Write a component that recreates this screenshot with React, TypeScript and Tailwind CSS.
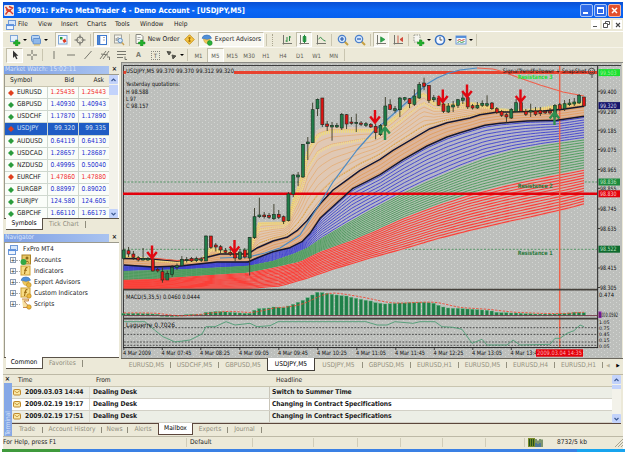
import type { ReactNode } from "react";
import clsx from "clsx";

type Point = [number, number];

/* ---------- chart data (svg units = window pixels) ---------- */

const FIRST_X = 123.7;
const STEP = 4.845;

// [bull, body top, body bottom, high, low]
const CANDLES: [0 | 1, number, number, number, number][] = [
  [1, 250, 258.3, 248.3, 260], [0, 250.7, 254, 247, 257], [0, 254, 257.3, 251, 260], [0, 257.7, 260, 256, 261.5],
  [1, 258.5, 260, 248, 260.5], [1, 258.5, 260, 257, 261], [0, 259, 271, 259, 271.5], [0, 269.3, 271, 267.5, 272.5],
  [0, 271.7, 280, 267.5, 282.7], [1, 273.3, 280, 270.7, 280], [1, 267.3, 274.3, 265, 277], [1, 265.7, 267.3, 263.5, 270],
  [1, 259.3, 265.7, 256, 266.5], [1, 259.3, 260.7, 257, 262.5], [0, 258.5, 261, 257, 262], [1, 258.7, 260.7, 256.7, 262],
  [1, 259, 260.3, 257, 262], [1, 236, 261, 235.5, 261], [0, 236, 247.3, 236, 249], [0, 245, 247, 243, 251.5],
  [0, 246.7, 250, 245, 253], [0, 250.5, 252.3, 248, 254], [0, 252.3, 254, 249, 256], [0, 254, 258, 250, 262],
  [1, 252, 259, 249, 260], [0, 250, 257, 248, 258.5], [1, 237.3, 258, 237, 275.5], [1, 216.7, 237.7, 208, 239],
  [1, 215, 216.7, 197.7, 218], [0, 215, 216.7, 212, 218.5], [0, 215.3, 217.3, 213, 219], [1, 214.3, 218.7, 204, 220],
  [0, 214.3, 217.3, 210, 219], [0, 216.7, 221.3, 215.5, 224], [1, 194, 220.7, 192, 221.5], [1, 175, 194, 174, 197],
  [1, 175, 177, 172, 186], [1, 144.3, 177, 144, 178], [1, 142, 143.7, 137, 160], [1, 109.7, 142.7, 102.7, 143],
  [1, 99.3, 108.7, 98.5, 116], [0, 98, 124.7, 98, 127], [0, 124, 126.3, 121, 131], [1, 125.3, 127, 122, 140.7],
  [1, 125.3, 127, 123, 128], [1, 114.3, 128, 113, 130], [0, 114.7, 124, 114, 129], [0, 122, 123.3, 117, 124.7],
  [1, 122.3, 123.5, 113.7, 132], [0, 123, 124.3, 121, 126], [1, 123.7, 125.3, 122, 127], [0, 124.3, 127, 123, 128],
  [0, 126.3, 132.7, 123.7, 139.3], [1, 125.3, 134.7, 124, 136], [1, 106, 125.3, 97, 126.3], [0, 104.7, 109.3, 99.3, 110],
  [1, 108.7, 110.3, 106, 112.7], [1, 98, 109.7, 97, 117], [1, 97.7, 99.3, 97, 101.3], [0, 98.7, 103.7, 98, 108],
  [1, 96, 104.3, 89.3, 106], [1, 84.3, 98, 82, 99], [0, 83, 86.3, 77.7, 90.3], [0, 85.3, 100.3, 85, 103],
  [1, 97.7, 99.7, 95, 102], [0, 98, 105.3, 96, 106], [0, 104, 111.3, 103, 113], [1, 106, 112, 103, 113],
  [1, 105, 107, 101, 112], [1, 99.7, 105.3, 99, 108], [1, 98, 100.3, 93, 104], [0, 97.7, 107, 97, 109],
  [0, 105.7, 108, 104, 109.5], [1, 105.3, 108, 102, 109], [1, 103.3, 105.3, 100.3, 107], [1, 103.7, 105.3, 95.3, 107],
  [0, 103, 108.7, 102, 110], [0, 108.7, 112.7, 107, 114], [0, 111.3, 115.3, 110, 117], [0, 114.7, 117, 113, 122.7],
  [1, 109.3, 118, 108, 119], [1, 102.7, 111.3, 99, 112], [0, 102.7, 111.3, 101, 112], [0, 111.3, 114.3, 109, 116],
  [1, 110.3, 112, 103.7, 117], [0, 111, 114.3, 107, 116], [0, 110.3, 113.7, 107, 116], [0, 111.3, 113, 110, 114],
  [0, 111, 113, 108, 114.5], [1, 105.3, 117, 104, 119], [0, 104.7, 109.3, 103, 111], [1, 103.7, 108.7, 100, 111],
  [1, 103, 104.7, 99, 106], [1, 102, 104, 98, 106], [1, 95.3, 103, 94, 104], [0, 97, 106, 97, 106.5],
];

const RIBBON_TOP: Point[] = [
  [124, 256], [152, 260], [180, 262], [205, 260], [208, 246], [220, 251], [247, 255], [252, 246], [257, 222], [287, 222],
  [293, 200], [301, 178], [308, 146], [318, 129], [330, 126], [373, 128], [387, 122], [400, 111], [412, 100], [423, 90],
  [433, 101], [447, 104], [470, 102], [485, 105], [497, 109], [513, 111], [533, 110], [563, 105], [584, 102],
];
const FAST_MA: Point[] = [
  [124, 258.5], [152, 259], [177, 261], [200, 259], [220, 254], [248, 254], [257, 248], [273, 241], [287, 237.3],
  [297, 230.7], [307, 220.7], [320, 204], [333, 190], [345, 181.3], [360, 170.3], [380, 159.3], [393, 150.3],
  [410, 140.3], [430, 128.7], [447, 122.7], [470, 118], [480, 114.7], [498, 112], [513, 112], [543, 111], [563, 109.3],
  [584, 106.3],
];
const SLOW_MA: Point[] = [
  [124, 265], [153, 267], [180, 266], [217, 262], [248, 262], [257, 258], [273, 251.7], [290, 247.7], [302, 241.7],
  [310, 233.3], [320, 218.3], [337, 202.7], [353, 188.3], [367, 181.3], [380, 174.7], [403, 159.7], [427, 146],
  [447, 137], [460, 132.7], [485, 125.3], [500, 123.3], [527, 121], [557, 120.3], [584, 116.3],
];
const BLUE_EDGE: Point[] = [
  [124, 271], [180, 269.5], [248, 266], [273, 261], [293, 254], [307, 248], [320, 239], [347, 223], [370, 210],
  [403, 192.5], [425, 182], [460, 167], [485, 157.5], [513, 150], [543, 144.5], [584, 138.7],
];
const GREEN_EDGE: Point[] = [
  [124, 280], [153, 279.3], [187, 276.7], [248, 272.7], [277, 267], [300, 261.7], [320, 251.7], [353, 240], [370, 233],
  [403, 218], [437, 205], [470, 194], [503, 185.5], [532, 179], [553, 175], [584, 169],
];
const RED_EDGE: Point[] = [
  [124, 288.7], [253, 288.7], [280, 286.7], [307, 279], [333, 270], [370, 259], [403, 250], [437, 240], [470, 231.7],
  [503, 224], [537, 216.7], [570, 209], [584, 205],
];
const TREND_UP: Point[] = [
  [220, 258], [248, 257], [265, 253], [280, 248], [300, 235], [317, 208], [333, 182], [343, 168.7], [357, 150],
  [373, 132], [390, 117], [407, 102], [427, 84], [437, 78], [447, 73.7], [460, 70], [477, 68],
];
const TREND_DOWN: Point[] = [[477, 68], [493, 69], [504, 72], [517, 77], [540, 85], [563, 92], [584, 96]];

const MACD = [
  2, 2, 2, 2, 1.7, 1.7, 1.3, 1, -1, -1.3, -1.3, -1, -0.7, 0.7, 1, 1, 1, 3, 3.3, 3.8, 3.6, 3.4, 3, 2.6, 2.3, 2, 2, 5, 6.6, 7,
  7.3, 8.3, 8, 7.7, 9.3, 11, 13, 15, 17.5, 20.3, 23, 22.6, 22, 21, 20.3, 19.6, 19.3, 18, 17, 16, 15, 14.3, 12.6, 12, 11.3,
  11.6, 12, 12.3, 12.3, 12.6, 12.6, 13, 13, 12.6, 12, 10, 8.3, 7.3, 7, 7, 6.6, 6.3, 6, 5.6, 5.3, 5, 4.3, 3, 2.6, 2.6, 2.3,
  2.3, 2, 1.6, 1.6, 1.3, 1.3, 1.3, 1.3, 1.3, 1.6, 2, 2.3, 3, 3, 2.6,
];

const LAGUERRE: Point[] = [
  [124, 321.7], [145, 321.7], [152, 328], [163, 336.7], [175, 342], [190, 340], [202, 334], [206, 326.7], [215, 326.7],
  [226, 321.7], [235, 325], [250, 323.3], [257, 326.7], [270, 325.7], [278, 321.7], [366, 321.7], [377, 325], [387, 325],
  [395, 321.7], [413, 323.3], [420, 321.7], [435, 321.7], [442, 326.7], [453, 327.3], [462, 329.3], [472, 343.3],
  [482, 339.3], [487, 345], [507, 345], [513, 340], [520, 345], [550, 344.3], [555, 338.3], [560, 338.3], [567, 333.3],
  [574, 330.7], [580, 325], [584, 326.7],
];

const SCALE: [string, number][] = [
  ["99.400", 91.3], ["99.290", 111.9], ["99.185", 130.3], ["99.075", 149.5], ["98.965", 169.5], ["98.855", 188.3],
  ["98.745", 209], ["98.635", 228.5], ["98.415", 268], ["98.305", 287.5],
];
const TIMES: [string, number][] = [
  ["4 Mar 2009", 123], ["4 Mar 07:45", 161.5], ["4 Mar 08:25", 200], ["4 Mar 09:05", 239], ["4 Mar 09:45", 278],
  ["4 Mar 10:25", 317], ["4 Mar 11:05", 356], ["4 Mar 11:45", 395], ["4 Mar 12:25", 433.5], ["4 Mar 13:05", 472],
  ["4 Mar 13:45", 510.5],
];

function yAt(line: Point[], x: number) {
  for (let i = 1; i < line.length; i++) {
    const [x0, y0] = line[i - 1];
    const [x1, y1] = line[i];
    if (x <= x1) return y0 + ((y1 - y0) * (x - x0)) / (x1 - x0);
  }
  return line[line.length - 1][1];
}

const XS = CANDLES.map((_, i) => FIRST_X + i * STEP);

function toPoints(line: Point[]) {
  return line.map((p) => p.join(",")).join(" ");
}

function blend(a: Point[], b: Point[], t: number) {
  return XS.map((x) => `${x.toFixed(1)},${(yAt(a, x) * (1 - t) + yAt(b, x) * t).toFixed(1)}`).join(" ");
}

interface RibbonProps {
  top: Point[];
  bottom: Point[];
  count: number;
  color: string;
  fill: string;
  width?: number;
}

function Ribbon({ top, bottom, count, color, fill, width = 1 }: RibbonProps) {
  const area = [
    ...XS.map((x) => [x, yAt(top, x)] as Point),
    ...[...XS].reverse().map((x) => [x, yAt(bottom, x)] as Point),
  ];
  return (
    <g fill="none" stroke={color} strokeWidth={width}>
      <polygon points={toPoints(area)} fill={fill} stroke="none" />
      {Array.from({ length: count }, (_, i) => (
        <polyline key={i} points={blend(top, bottom, (i + 0.5) / count)} />
      ))}
    </g>
  );
}

interface LabelProps {
  x: number;
  y: number;
  w: number;
  size?: number;
  fill?: string;
  bold?: boolean;
  children: string;
}

function Label({ x, y, w, size = 6, fill = "#111", bold, children }: LabelProps) {
  return (
    <text x={x} y={y} textLength={w} lengthAdjust="spacingAndGlyphs" fontSize={size} fill={fill} fontWeight={bold ? 700 : 400}>
      {children}
    </text>
  );
}

function PriceTag({ y, color, text, fill = "#fff" }: { y: number; color: string; text: string; fill?: string }) {
  return (
    <g>
      <rect x="598.5" y={y - 3.5} width="21.5" height="7" fill={color} />
      <Label x={600} y={y + 2.2} w={16.5} fill={fill}>
        {text}
      </Label>
    </g>
  );
}

function SignalArrow({ x, y, up }: { x: number; y: number; up?: boolean }) {
  return (
    <path
      transform={`translate(${x} ${y})${up ? " scale(1 -1)" : ""}`}
      d="M0-7V5.5M-4.8-.5L0 5.5 4.8-.5"
      fill="none"
      stroke={up ? "#2f8f50" : "#e00812"}
      strokeWidth="2.4"
    />
  );
}

function Chart() {
  return (
    <svg
      className="block h-[296px] w-[502px] shrink-0"
      viewBox="121 62 502 296"
      fontFamily="'DejaVu Sans Condensed', 'DejaVu Sans', sans-serif"
    >
      <defs>
        <pattern id="grain" width="6" height="4" patternUnits="userSpaceOnUse">
          <rect width="6" height="4" fill="#bdbfbc" />
          <rect x="1" y="0" width="1" height="1" fill="#d3d5d2" />
          <rect x="4" y="2" width="1" height="1" fill="#d3d5d2" />
        </pattern>
      </defs>
      <rect x="121" y="62" width="502" height="296" fill="#bfbfba" />
      <rect x="122" y="64" width="500" height="294" fill="url(#grain)" shapeRendering="crispEdges" />
      <path d="M121 62.5H623M121.5 62V358" stroke="#8b8b85" fill="none" />
      <path d="M123.5 348V65.5H621" stroke="#3c3c3c" fill="none" />
      <path d="M622.5 63V358" stroke="#ece9d8" />

      <g stroke="#3c8c50" strokeWidth="0.8" strokeDasharray="2 1.6">
        <path d="M124 182H597M124 249.3H597" />
      </g>

      <Ribbon top={RIBBON_TOP} bottom={FAST_MA} count={9} color="#e5a96c" fill="#e0c8b4" width={0.7} />
      <Ribbon top={FAST_MA} bottom={SLOW_MA} count={4} color="#e29a55" fill="#dcb59c" width={0.8} />
      <Ribbon top={SLOW_MA} bottom={BLUE_EDGE} count={9} color="#3c40cf" fill="#b6b6c8" width={0.9} />
      <Ribbon top={BLUE_EDGE} bottom={GREEN_EDGE} count={12} color="#479858" fill="#b4c0b4" width={0.9} />
      <Ribbon top={GREEN_EDGE} bottom={RED_EDGE} count={14} color="#fa4039" fill="#ccb8b3" width={1.1} />
      <g fill="none" strokeDasharray="1 1">
        <polyline points={blend(RIBBON_TOP, FAST_MA, 0.08)} stroke="#f0e070" strokeWidth="3.5" />
        <polyline points={blend(RIBBON_TOP, FAST_MA, 0.3)} stroke="#f2dc8a" strokeWidth="2.5" />
        <polyline points={blend(RIBBON_TOP, FAST_MA, 0.85)} stroke="#d9a030" strokeWidth="1" />
      </g>

      <path d="M123 193.7H597" stroke="#e3000b" strokeWidth="2.6" />
      <path d="M234 72.4H597" stroke="#e8422e" strokeWidth="3" />
      <path d="M123.5 72.4H126" stroke="#e8422e" strokeWidth="3" />
      <path d="M559.7 66V348" stroke="#f0624a" strokeWidth="1.4" />

      <g fill="none" strokeLinejoin="round">
        <polyline points={toPoints(FAST_MA)} stroke="#161630" strokeWidth="1.5" />
        <polyline points={toPoints(SLOW_MA)} stroke="#161630" strokeWidth="1.5" />
        <polyline points={toPoints(TREND_UP)} stroke="#4b8ac4" strokeWidth="1.2" />
        <polyline points={toPoints(TREND_DOWN)} stroke="#f0604c" strokeWidth="1.1" />
        <path d="M152 258L177 260.5 205 258.5" stroke="#f0604c" strokeWidth="1.2" />
      </g>

      {CANDLES.map(([bull, top, bottom, high, low], i) => (
        <g key={i}>
          <path d={`M${XS[i]} ${high}V${low}`} stroke="#3a3a28" strokeWidth="0.9" />
          <rect
            x={XS[i] - 1.5}
            y={top}
            width="3"
            height={bottom - top}
            fill={bull ? "#1f7d48" : "#dc1414"}
            stroke="#1c2c20"
            strokeWidth="0.6"
          />
        </g>
      ))}

      <SignalArrow x={152} y={252.5} />
      <SignalArrow x={234.5} y={247} />
      <SignalArrow x={375} y={117} />
      <SignalArrow x={442.8} y={96.5} />
      <SignalArrow x={467} y={91.5} />
      <SignalArrow x={520.5} y={96.5} />
      <SignalArrow x={385} y={133} up />
      <SignalArrow x={554.5} y={118} up />

      <Label x={126} y={72.8} w={108}>USDJPY,M5  99.370 99.370 99.312 99.320</Label>
      <Label x={126} y={86.2} w={54}>Yesterday quotations:</Label>
      <Label x={126} y={93.6} w={22.5}>H 98.588</Label>
      <Label x={126} y={100.6} w={10}>L 97</Label>
      <Label x={126} y={107.8} w={22.5}>C 98.157</Label>
      <Label x={502.5} y={73.4} w={84}>SignalTrendFollower + SnapShot</Label>
      <g fill="none" stroke="#333" strokeWidth="0.8">
        <circle cx="591.6" cy="71.4" r="3.2" />
        <path d="M589.8 72q1.8 2 3.6 0M590.5 70v.8M592.7 70v.8M592 75v3" />
      </g>
      <Label x={517.7} y={79.2} w={35} fill="#23e03a" bold>Resistance 3</Label>
      <Label x={517.7} y={188} w={35} fill="#2c7a3e" bold>Resistance 2</Label>
      <Label x={517.7} y={255.2} w={35} fill="#2c7a3e" bold>Resistance 1</Label>

      {/* sub windows */}
      <path d="M123 289.7H598M123 318.7H598" stroke="#44403a" strokeWidth="1.8" />
      <path d="M123 347.6H598M597.7 66V348" stroke="#222" fill="none" />
      {MACD.map((v, i) => (
        <rect
          key={i}
          x={XS[i] - 1.9}
          y={v > 0 ? 315.3 - v : 315.3}
          width="3.4"
          height={Math.abs(v)}
          fill="#1f8049"
          stroke="#5db37c"
          strokeWidth="0.4"
        />
      ))}
      <path d="M123 315.6H598" stroke="#6b3040" strokeWidth="0.9" />
      <polyline
        points={MACD.map((_, i) => {
          const recent = MACD.slice(Math.max(0, i - 4), i + 1);
          const avg = recent.reduce((a, b) => a + b, 0) / recent.length;
          return `${XS[i]},${314.9 - avg}`;
        }).join(" ")}
        fill="none"
        stroke="#ee4a34"
        strokeWidth="0.9"
        strokeDasharray="2.4 1.4"
      />
      <Label x={126} y={298.6} w={74}>MACD(5,35,5) 0.0460 0.0444</Label>
      <path d="M124 327.7H597M124 334.4H597M124 342H597M124 345.3H597" stroke="#444" strokeWidth="0.9" strokeDasharray="1.8 1.4" />
      <polyline points={toPoints(LAGUERRE)} fill="none" stroke="#4d9c74" strokeWidth="0.9" />
      <Label x={126} y={327.4} w={49}>Laguerre 0.7026</Label>

      {/* price scale */}
      {SCALE.map(([text, y]) => (
        <g key={text}>
          <path d={`M598 ${y}h2`} stroke="#222" strokeWidth="0.8" />
          <Label x={600} y={y + 2.2} w={16.5}>{text}</Label>
        </g>
      ))}
      <PriceTag y={72.6} color="#19e02e" text="99.503" fill="#9ff0a0" />
      <PriceTag y={105.6} color="#16166a" text="99.320" fill="#d8d8f0" />
      <PriceTag y={182} color="#1c8a3c" text="98.836" fill="#b8e0c0" />
      <PriceTag y={193.8} color="#e3000b" text="98.830" fill="#ffc8c8" />
      <PriceTag y={249.2} color="#0f6a2e" text="98.522" fill="#b8e0c0" />
      <Label x={599} y={297.4} w={15}>0.474</Label>
      <rect x="598.5" y="311.5" width="3" height="6.5" fill="#8a1fa8" />
      <Label x={599} y={316.8} w={6}>0.00</Label>
      <Label x={605.6} y={316.8} w={12.4}>0.0592</Label>
      <Label x={599} y={323.9} w={10.5} size={4.8}>1.05</Label>
      <Label x={599} y={329.8} w={10.5} size={4.8}>0.75</Label>
      <Label x={599} y={335.9} w={10.5} size={4.8}>0.45</Label>
      <Label x={599} y={341.7} w={10.5} size={4.8}>0.15</Label>
      <Label x={599} y={347.5} w={10.5} size={4.8}>0.05</Label>

      {/* time scale */}
      {TIMES.map(([text, x]) => (
        <g key={text}>
          <path d={`M${x + 0.8} 348v2`} stroke="#222" strokeWidth="0.8" />
          <Label x={x} y={355} w={text.length > 10 ? 30 : 28}>{text}</Label>
        </g>
      ))}
      <rect x="536" y="349.3" width="47" height="7.4" fill="#e3000b" />
      <Label x={537} y={355.2} w={45} fill="#ffb4b4">2009.03.04 14:35</Label>
    </svg>
  );
}

/* ---------- small icons ---------- */

function Icon({ size = 12, children }: { size?: number; children: ReactNode }) {
  return (
    <svg width={size} height={size} viewBox="0 0 12 12" fill="none" className="shrink-0">
      {children}
    </svg>
  );
}

const PLUS = "M6.5 6h2.4v2H11v2H8.900v2H6.500v-2H4.500V8h2z";

const WindowsIcon = () => (
  <Icon>
    <rect x="3.500" y="1.500" width="7" height="5" fill="#d6e6fa" stroke="#6f9ad8" />
    <rect x="1.500" y="5.500" width="7" height="5" fill="#eef5ff" stroke="#6f9ad8" />
    <path d="M1 6.300h8" stroke="#5a90e0" strokeWidth="1.500" />
  </Icon>
);
const NewChartIcon = () => (
  <Icon>
    <rect x="1.500" y="1.500" width="7" height="6" fill="#e6f0fb" stroke="#7fa6d6" />
    <path d={PLUS} fill="#22b02c" stroke="#128a1c" strokeWidth="0.500" />
  </Icon>
);
const ProfilesIcon = () => (
  <Icon>
    <rect x="1.500" y="1.500" width="8" height="6" rx="1" fill="#b8d4f4" stroke="#5f8fce" />
    <rect x="3" y="4.500" width="7.500" height="5.500" rx="1" fill="#8fb8ea" stroke="#5f8fce" />
    <path d="M4 11h6" stroke="#d8b860" />
  </Icon>
);
const WatchIcon = () => (
  <Icon>
    <rect x="1.500" y="1.500" width="8.500" height="8.500" fill="#f2f7ff" stroke="#7fa6d6" />
    <path d="M5.500 6.500L8 4.500l1.500 3-2.500 1.500z" fill="#dd3a22" />
    <path d="M3 3h2.500v2.500H3z" fill="#2a9a3a" />
  </Icon>
);
const DataIcon = () => (
  <Icon>
    <circle cx="6" cy="6" r="3.200" stroke="#6c6c66" />
    <path d="M6 .500v4M6 7.500v4M.500 6h4M7.500 6h4" stroke="#6c6c66" />
  </Icon>
);
const NavigatorIcon = () => (
  <Icon>
    <rect x="1.500" y="1.500" width="9" height="9" fill="#fff" stroke="#3d79cf" />
    <path d="M3.200 1v10" stroke="#3d79cf" strokeWidth="2.200" />
    <path d="M7 3.500h2M7 6h2" stroke="#aab" />
  </Icon>
);
const TesterIcon = () => (
  <Icon>
    <rect x="1.500" y="1" width="7" height="8" fill="#f4f4ee" stroke="#a4a49c" />
    <path d="M3.200 7V4M5 7V3" stroke="#888" />
    <circle cx="7.200" cy="6.500" r="2.200" fill="#d8e8fa" stroke="#6090c0" />
    <path d="M9 8.500l2 2.500" stroke="#c8a050" strokeWidth="1.300" />
  </Icon>
);
const OrderIcon = () => (
  <Icon>
    <path d="M2 .500h5l2 2v7H2z" fill="#fafaf4" stroke="#8a8a82" />
    <path d="M3.500 3.500h3M3.500 5.500h2" stroke="#aaa" />
    <path d={PLUS} fill="#22b02c" stroke="#128a1c" strokeWidth="0.500" />
  </Icon>
);
const EditorIcon = () => (
  <Icon size={11}>
    <path d="M6 .800L11.200 6 6 11.200 .800 6z" fill="#f5c542" stroke="#c89018" />
    <path d="M6 3.500v5M4.500 4.500q1.500-1 3 0M4.500 7.500q1.500 1 3 0" stroke="#9c6a08" />
  </Icon>
);
const AdvisorsIcon = ({ stopped }: { stopped?: boolean }) => (
  <Icon>
    <path d="M1 4.200q1-3.400 5-3.200 3.500 0 4.500 3.200L6 5.800z" fill="#4f8fd8" stroke="#356fb4" strokeWidth="0.600" />
    <path d="M2.500 5q.5 4.500 4 4.500Q9 9 9 5L6 6z" fill="#f2c95c" stroke="#c09a3a" strokeWidth="0.500" />
    <circle cx="8.800" cy="9" r="2.400" fill={stopped ? "#e8b840" : "#2bb03a"} stroke={stopped ? "#b88a1c" : "#158a24"} strokeWidth="0.600" />
  </Icon>
);
const BarsIcon = ({ kind }: { kind: "bars" | "candles" | "line" | "scroll" | "shift" }) => (
  <Icon>
    <path d="M2.500 1v9.500M1.500 9.500H11" stroke="#77776f" />
    {kind === "bars" && <path d="M6 3v5M4.500 7H6M8.500 2v5M8.500 3H10" stroke="#2d8a43" />}
    {kind === "candles" && <path d="M6.500 .800v8.200M5.200 2.500h2.600v5H5.200z" stroke="#1f8c3c" fill="#37b356" />}
    {kind === "line" && <path d="M3.500 5q2-3 3.500-.500T10.500 7" stroke="#2d8a43" />}
    {kind === "scroll" && <path d="M5.500 2.500v6M6 3l4 2.500L6 8z" stroke="#1f8c3c" strokeWidth="0.600" fill="#2eaa49" />}
    {kind === "shift" && <path d="M6 1.500v7.500M10.500 3.500L8 5.500l2.500 2z" stroke="#cc3a2a" strokeWidth="0.800" fill="#dc4a38" />}
  </Icon>
);
const ZoomIcon = ({ plus }: { plus?: boolean }) => (
  <Icon>
    <path d="M7.500 7.500L11 11" stroke="#c8a040" strokeWidth="2" />
    <circle cx="5" cy="5" r="3.700" fill="#d4e6fb" stroke="#4a7fca" strokeWidth="1.200" />
    <path d={plus ? "M3 5h4M5 3v4" : "M3 5h4"} stroke="#2358b0" strokeWidth="1.200" />
  </Icon>
);
const IndicatorsIcon = () => (
  <Icon>
    <rect x="1" y="1" width="6" height="7" fill="#f6f6f0" stroke="#99998f" strokeDasharray="1.500 1" />
    <path d={PLUS} fill="#22b02c" stroke="#128a1c" strokeWidth="0.500" />
  </Icon>
);
const ClockIcon = () => (
  <Icon>
    <circle cx="6" cy="6" r="4.500" fill="#f2f7ff" stroke="#3b74c4" strokeWidth="1.600" />
    <path d="M6 3v3h2.200" stroke="#555" />
  </Icon>
);
const TemplateIcon = () => (
  <Icon>
    <rect x="1" y="2" width="10" height="8" fill="#f4f8fc" stroke="#6f9ad8" />
    <path d="M1 3h10" stroke="#4a86d6" strokeWidth="1.800" />
    <path d="M2.500 6.500l2-1 2 1 3-1" stroke="#cf4a36" />
    <path d="M2.500 8.500l2-1 2 1 3-1" stroke="#3b9a4c" />
  </Icon>
);

const Caret = () => <span className="h-0 w-0 border-x-2 border-t-2 border-x-transparent border-t-black" />;
const Divider = () => <span className="mx-[2px] h-[12px] w-px bg-[#c9c5b0]" />;
const Grip = () => <span className="mx-[3px] h-[12px] w-[3px] border-l border-dotted border-[#aaa690]" />;

function Tool({ w, pressed, children }: { w: string; pressed?: boolean; children: ReactNode }) {
  return (
    <div
      className={clsx(
        "flex h-[15px] shrink-0 items-center justify-center gap-[2px] border",
        w,
        pressed ? "border-[#c2bea9] border-r-white border-b-white bg-[#f8f7f0]" : "border-transparent",
      )}
    >
      {children}
    </div>
  );
}

function MainToolbar() {
  return (
    <div className="flex h-[16px] items-center border-t border-white">
      <div className="flex w-[52px] shrink-0 items-center pl-[4px]">
        <Tool w="w-[21px]"><NewChartIcon /><Caret /></Tool>
        <Tool w="w-[22px]"><ProfilesIcon /><Caret /></Tool>
      </div>
      <Tool w="w-[16px]" pressed><WatchIcon /></Tool>
      <Tool w="w-[17px]"><DataIcon /></Tool>
      <Divider />
      <Tool w="w-[17px]" pressed><NavigatorIcon /></Tool>
      <Tool w="w-[17px]"><TesterIcon /></Tool>
      <Divider />
      <Tool w="w-[49px]"><OrderIcon /><span>New Order</span></Tool>
      <Tool w="w-[17px]"><EditorIcon /></Tool>
      <Tool w="w-[66px]" pressed><AdvisorsIcon /><span>Expert Advisors</span></Tool>
      <Divider />
      <Grip />
      <Tool w="w-[18px]"><BarsIcon kind="bars" /></Tool>
      <Tool w="w-[16px]" pressed><BarsIcon kind="candles" /></Tool>
      <Tool w="w-[17px]"><BarsIcon kind="line" /></Tool>
      <Divider />
      <Tool w="w-[17px]"><ZoomIcon plus /></Tool>
      <Tool w="w-[17px]"><ZoomIcon /></Tool>
      <Divider />
      <Tool w="w-[16px]" pressed><BarsIcon kind="scroll" /></Tool>
      <Tool w="w-[17px]"><BarsIcon kind="shift" /></Tool>
      <Divider />
      <Tool w="w-[21px]"><IndicatorsIcon /><Caret /></Tool>
      <Tool w="w-[21px]"><ClockIcon /><Caret /></Tool>
      <Tool w="w-[21px]"><TemplateIcon /><Caret /></Tool>
      <Divider />
    </div>
  );
}

const DRAW_TOOLS = [
  "M6 2v8", "M2 6h8", "M2.500 10L9.500 2", "M1 10L7 2M4 10l6-8M2 5l7 1M8 8h2.500v3",
  "M1 2.500h9M1 5.500h9M1 8.500h6M9 7.500v3h2",
];
const PERIODS = ["M1", "M5", "M15", "M30", "H1", "H4", "D1", "W1", "MN"];

function LineToolbar() {
  return (
    <div className="flex h-[15px] items-center border-t border-[#f6f4ea]">
      <div className="w-[3px] shrink-0" />
      <Tool w="w-[17px]" pressed>
        <Icon><path d="M4 1.500v7.500l1.800-1.700 1.400 3 1.300-.600-1.400-2.900h2.300z" fill="#333" /></Icon>
      </Tool>
      <Tool w="w-[17px]"><Icon><path d="M6 1v4M6 7v4M1 6h4M7 6h4" stroke="#66665e" /></Icon></Tool>
      <Divider />
      {DRAW_TOOLS.map((d) => (
        <Tool key={d} w="w-[17px]"><Icon><path d={d} stroke="#77776d" /></Icon></Tool>
      ))}
      <Tool w="w-[17px]"><span className="text-[7px] font-bold text-[#77776d]">A</span></Tool>
      <Tool w="w-[17px]">
        <span className="flex h-[9px] w-[9px] items-center justify-center border border-dotted border-[#88887e] text-[6px] text-[#55554d]">T</span>
      </Tool>
      <Tool w="w-[21px]">
        <Icon><path d="M1 2.500l4 .500-2 3zM6 6l4 1-3 3z" fill="#55554d" stroke="#55554d" /></Icon>
        <Caret />
      </Tool>
      <Divider />
      <div className="flex text-[6px] text-[#5c5c54]">
        {PERIODS.map((p) => (
          <Tool key={p} w="w-[16.9px]" pressed={p === "M5"}>{p}</Tool>
        ))}
      </div>
      <Divider />
    </div>
  );
}

/* ---------- side panels ---------- */

function PanelTitle({ children }: { children: ReactNode }) {
  return (
    <div className="flex h-[9px] shrink-0 items-center justify-between">
      <div className="flex h-[8px] w-[105px] items-center overflow-hidden bg-linear-to-r from-[#7d9fe4] to-[#a9c3f0] pl-px text-[#dbe6fb]">
        {children}
      </div>
      <span className="pr-[2px] text-[7px] font-bold">×</span>
    </div>
  );
}

function ScrollButton({ down }: { down?: boolean }) {
  return (
    <div className="flex h-[9px] w-[9px] shrink-0 items-center justify-center rounded-[1px] bg-[#c3d3fb]">
      <svg width="5" height="4" viewBox="0 0 5 4" fill="none">
        <path d={down ? "M.500 1l2 2 2-2" : "M.500 3l2-2 2 2"} stroke="#3f5c96" strokeWidth="1.200" />
      </svg>
    </div>
  );
}

const QUOTES = [
  { symbol: "EURUSD", bid: "1.25435", ask: "1.25443", down: true },
  { symbol: "GBPUSD", bid: "1.40930", ask: "1.40943" },
  { symbol: "USDCHF", bid: "1.17870", ask: "1.17890" },
  { symbol: "USDJPY", bid: "99.320", ask: "99.335", down: true, selected: true },
  { symbol: "AUDUSD", bid: "0.64119", ask: "0.64130" },
  { symbol: "USDCAD", bid: "1.28657", ask: "1.28687" },
  { symbol: "NZDUSD", bid: "0.49995", ask: "0.50040" },
  { symbol: "EURCHF", bid: "1.47860", ask: "1.47880", down: true },
  { symbol: "EURGBP", bid: "0.88997", ask: "0.89020" },
  { symbol: "EURJPY", bid: "124.580", ask: "124.605" },
  { symbol: "GBPCHF", bid: "1.66110", ask: "1.66173" },
];

function MarketWatch() {
  return (
    <div className="flex h-[166px] flex-col">
      <PanelTitle>Market Watch: 15:02:11</PanelTitle>
      <div className="flex h-[144px] border-t border-l border-[#9c9a8c] bg-white">
        <div className="flex w-[104px] shrink-0 flex-col overflow-hidden">
          <div className="grid h-[12px] shrink-0 grid-cols-[42px_31px_31px] items-center border-b border-[#c9c5b0] bg-[#ece9d8]">
            <span className="pl-[5px]">Symbol</span>
            <span className="pr-[4px] text-right">Bid</span>
            <span className="pr-[5px] text-right">Ask</span>
          </div>
          {QUOTES.map((q) => (
            <div
              key={q.symbol}
              className={clsx(
                "grid h-[12.13px] shrink-0 grid-cols-[42px_31px_31px] border-b border-[#cfd8cf]",
                q.selected ? "bg-[#1f5cc4] text-[#d6e2fa]" : "bg-[#fafdf9]",
              )}
            >
              <span className="flex items-center gap-[3px] pl-[3px]">
                <svg width="6" height="6" viewBox="0 0 6 6">
                  <path d="M3 0l3 3-3 3-3-3z" fill={q.down ? "#e0401e" : "#2a9c3c"} />
                </svg>
                {q.symbol}
              </span>
              {[q.bid, q.ask].map((price) => (
                <span
                  key={price}
                  className={clsx(
                    "flex items-center justify-end border-l border-[#cfd8cf] pr-[3px]",
                    !q.selected && (q.down ? "text-[#f22c2c]" : "text-[#1a2fd0]"),
                  )}
                >
                  {price}
                </span>
              ))}
            </div>
          ))}
        </div>
        <div className="flex w-[9px] flex-col justify-between bg-[#f3f2ea]">
          <div>
            <ScrollButton />
            <div className="mt-px h-[10px] w-[9px] bg-[#c3d3fb]" />
          </div>
          <ScrollButton down />
        </div>
      </div>
      <PanelTabs active="Symbols" other="Tick Chart" />
    </div>
  );
}

function PanelTabs({ active, other }: { active: string; other: string }) {
  return (
    <div className="flex h-[12px] shrink-0 border-t border-[#5a5248] text-[#8f8c7c]">
      <span className="-mt-px ml-[2px] flex h-[12px] w-[37px] items-center justify-center border-r border-b border-[#5a5248] bg-white text-black">
        {active}
      </span>
      <span className="flex h-[10px] items-center pl-[6px]">{other}</span>
      <span className="ml-[6px] mt-[2px] h-[7px] w-px bg-[#8f8c7c]" />
    </div>
  );
}

const FolderIcon = ({ custom }: { custom?: boolean }) => (
  <Icon>
    <rect x="1" y="1" width="9" height="9" fill="#f7dc84" stroke="#cf9f33" />
    <path d="M7.500 2.800Q6 2.200 5.500 4L4.500 9M4 5.200h3" stroke="#9a6a10" strokeWidth="1.100" />
    {custom && <circle cx="9" cy="9" r="2.200" fill="#f0b93a" stroke="#b98520" strokeWidth="0.700" />}
  </Icon>
);

const NAV_ITEMS = [
  {
    label: "Accounts",
    icon: (
      <Icon>
        <rect x="2" y="1" width="8.500" height="9" fill="#e9c765" stroke="#a98224" />
        <circle cx="7" cy="4" r="1.500" fill="#8a6a1c" />
        <path d="M5 8.500q2-3 4 0" stroke="#8a6a1c" />
        <circle cx="3.500" cy="8" r="3" fill="#32a845" />
      </Icon>
    ),
  },
  { label: "Indicators", icon: <FolderIcon /> },
  { label: "Expert Advisors", icon: <AdvisorsIcon stopped /> },
  { label: "Custom Indicators", icon: <FolderIcon custom /> },
  {
    label: "Scripts",
    icon: (
      <Icon>
        <path d="M2 1h6.500v2H4L8.500 8v1.500H3" fill="#f7e0a0" stroke="#c58a50" />
        <circle cx="9" cy="9" r="2.200" fill="#f0b93a" stroke="#b98520" strokeWidth="0.700" />
      </Icon>
    ),
  },
];

function Navigator() {
  return (
    <div className="mt-[2px] flex h-[136px] flex-col">
      <PanelTitle>Navigator</PanelTitle>
      <div className="flex flex-1 flex-col border-t border-l border-[#9c9a8c] bg-white pt-px">
        <div className="flex h-[11px] items-center gap-[4px] pl-[2px]">
          <WindowsIcon />
          FxPro MT4
        </div>
        {NAV_ITEMS.map(({ label, icon }) => (
          <div key={label} className="flex h-[10.9px] items-center pl-[5px]">
            <span className="flex h-[6px] w-[6px] items-center justify-center border border-[#8d9db4] bg-white text-[6px] leading-none">+</span>
            <span className="w-[4px] border-t border-dotted border-[#aaa]" />
            {icon}
            <span className="pl-[2px]">{label}</span>
          </div>
        ))}
      </div>
      <PanelTabs active="Common" other="Favorites" />
    </div>
  );
}

/* ---------- bottom ---------- */

const CHART_TABS = [
  "EURUSD,M5", "USDCHF,M5", "GBPUSD,M5", "USDJPY,M5", "USDJPY,M5", "GBPUSD,M5", "EURUSD,H1", "EURUSD,M5", "EURUSD,H4",
  "EURUSD,H1",
];

function ChartTabs() {
  return (
    <div className="flex h-[14px] border-t border-[#6a665c] pl-[2px] text-[#94917f]">
      {CHART_TABS.map((tab, i) => (
        <div
          key={i}
          className={clsx(
            "flex w-[48px] shrink-0 items-center justify-center",
            i === 3
              ? "-mt-px h-[13px] border-x border-b border-[#44403a] bg-white text-black"
              : "h-[12px]",
          )}
        >
          <span className="flex-1 text-center">{tab}</span>
          {i !== 3 && i !== 2 && <span className="h-[6px] w-px bg-[#94917f]" />}
        </div>
      ))}
      <div className="flex h-[12px] flex-1 items-center justify-around text-[5px]">
        <span className="text-[#b5b19c]">◀</span>
        <span className="text-black">▶</span>
      </div>
    </div>
  );
}

const MAILS = [
  ["2009.03.03 14:44", "Dealing Desk", "Switch to Summer Time"],
  ["2009.02.19 19:17", "Dealing Desk", "Changing in Contract Specifications"],
  ["2009.02.19 17:51", "Dealing Desk", "Changing in Contract Specifications"],
];
const TERMINAL_TABS = ["Trade", "Account History", "News", "Alerts", "Mailbox", "Experts", "Journal"];
const TAB_WIDTHS = ["w-[31px]", "w-[59px]", "w-[26px]", "w-[30px]", "w-[35px]", "w-[35px]", "w-[34px]"];

function Terminal() {
  return (
    <div className="mt-[2px] flex h-[62px] border-t border-[#bdb9a6]">
      <div className="flex w-[9px] shrink-0 flex-col items-center">
        <span className="h-[8px] text-[7px] leading-[8px] font-bold">×</span>
        <div className="flex w-[8px] flex-1 items-center overflow-hidden bg-[#86a8e6] text-[6.5px] leading-[8px] text-[#dbe6fb] [writing-mode:sideways-lr]">
          <span>Terminal</span>
        </div>
      </div>
      <div className="flex w-[609px] flex-col">
        <div className="flex h-[49px] border-b border-[#5c463c]">
          <div className="flex-1">
            <div className="grid h-[12px] grid-cols-[78px_180px_1fr] items-center border-b border-[#c9c5b0] pl-[6px]">
              <span>Time</span>
              <span>From</span>
              <span>Headline</span>
            </div>
            {MAILS.map(([time, from, headline], i) => (
              <div
                key={time}
                className={clsx(
                  "grid h-[12.1px] grid-cols-[77px_180px_1fr] border-b border-[#d2d0c6] text-[6.7px] font-bold tracking-[-0.05px]",
                  i === 1 ? "bg-white" : "bg-[#eceee6]",
                )}
              >
                <span className="flex items-center gap-[4px] pl-px">
                  <svg width="8" height="7" viewBox="0 0 8 7">
                    <rect x=".500" y=".500" width="7" height="5.500" rx="1" fill="#fae9a8" stroke="#c08a2c" />
                    <path d="M1 1.500l3 2.300L7 1.500" fill="none" stroke="#c08a2c" strokeWidth=".800" />
                  </svg>
                  {time}
                </span>
                <span className="flex items-center border-l border-[#dddbd0] pl-[3px]">{from}</span>
                <span className="flex items-center border-l border-[#c9c5b8] pl-[2px]">{headline}</span>
              </div>
            ))}
          </div>
          <div className="flex w-[9px] flex-col justify-between bg-[#f3f2ea]">
            <div>
              <ScrollButton />
              <div className="mt-px h-[4px] w-[9px] bg-[#c3d3fb]" />
            </div>
            <ScrollButton down />
          </div>
        </div>
        <div className="flex h-[12px] text-[#8f8c7c]">
          {TERMINAL_TABS.map((tab, i) => (
            <div
              key={tab}
              className={clsx(
                "flex shrink-0 items-center justify-center",
                TAB_WIDTHS[i],
                tab === "Mailbox"
                  ? "-mt-px h-[12px] border-x border-b border-[#5c463c] bg-white text-black"
                  : "h-[11px]",
              )}
            >
              <span className="flex-1 text-center">{tab}</span>
              {i !== 3 && i !== 4 && <span className="h-[6px] w-px bg-[#8f8c7c]" />}
            </div>
          ))}
        </div>
      </div>
    </div>
  );
}

function StatusBar() {
  return (
    <div className="flex h-[12px] items-center border-t border-[#bdb9a6]">
      <span className="w-[183px] shrink-0">For Help, press F1</span>
      <span className="h-[9px] w-[66px] shrink-0 border-l border-[#d0ccb8] pl-[3px] leading-[9px]">Default</span>
      <span className="h-[9px] w-[61px] shrink-0 border-l border-[#d0ccb8]" />
      <span className="h-[9px] w-[44px] shrink-0 border-l border-[#d0ccb8]" />
      <span className="h-[9px] w-[43px] shrink-0 border-l border-[#d0ccb8]" />
      <span className="h-[9px] w-[42px] shrink-0 border-l border-[#d0ccb8]" />
      <span className="h-[9px] w-[43px] shrink-0 border-l border-[#d0ccb8]" />
      <span className="h-[9px] w-[39px] shrink-0 border-l border-[#d0ccb8]" />
      <div className="flex h-[9px] flex-1 items-center border-l border-[#d0ccb8] pl-[3px]">
        <svg width="15" height="9" viewBox="0 0 15 9">
          <rect width="7" height="9" fill="#7d8f2a" />
          <path d="M1.500 1v7M3.500 1v7M5.500 1v7M8 1v8M10 2.500V9M12 1v8M14 1.500V9" stroke="#24521c" strokeWidth="1.100" />
          <path d="M8 5v4M10 6v3M12 5v4" stroke="#2c62b8" strokeWidth="1.100" />
        </svg>
        <span className="pl-[14px]">8732/5 kb</span>
      </div>
      <svg width="9" height="9" viewBox="0 0 9 9">
        <path d="M1 9l8-8M4 9l5-5M7 9l2-2" stroke="#a8a490" />
      </svg>
    </div>
  );
}

/* ---------- window ---------- */

function TitleBar() {
  return (
    <div className="flex h-[16px] items-center bg-linear-to-b from-[#0a50d4] via-[#0b66f4] to-[#0760ee] pr-[2px] pl-px text-white">
      <svg width="10" height="11" viewBox="0 0 10 11">
        <rect width="10" height="11" rx="1" fill="#f3e3dc" />
        <path d="M1.500 2l3 3.500-3 4M5 1.500l3.500 1.500-3 2.500 3.500 3.500M2 5h5" stroke="#d83a2a" strokeWidth="1.400" fill="none" />
      </svg>
      <span className="flex-1 pl-[3px] text-[7.6px] font-bold">
        367091: FxPro MetaTrader 4 - Demo Account - [USDJPY,M5]
      </span>
      <div className="flex gap-[1px]">
        <span className="flex h-[13px] w-[13px] items-end rounded-[2px] border border-[#a9c6f8] bg-[#2f6be8] pb-[2px] pl-[2px]">
          <span className="h-[2px] w-[5px] bg-white" />
        </span>
        <span className="flex h-[13px] w-[13px] items-center justify-center rounded-[2px] border border-[#a9c6f8] bg-[#2f6be8]">
          <span className="h-[7px] w-[7px] border border-t-2 border-white" />
        </span>
        <span className="flex h-[13px] w-[13px] items-center justify-center rounded-[2px] border border-[#f0b8a8] bg-[#e2502c]">
          <svg width="7" height="7" viewBox="0 0 7 7"><path d="M1 1l5 5M6 1L1 6" stroke="#fff" strokeWidth="1.500" /></svg>
        </span>
      </div>
    </div>
  );
}

const MENU: [string, string][] = [
  ["File", "w-[20px]"], ["View", "w-[23px]"], ["Insert", "w-[26px]"], ["Charts", "w-[28px]"], ["Tools", "w-[25px]"],
  ["Window", "w-[34px]"], ["Help", "w-[20px]"],
];

function MenuBar() {
  return (
    <div className="flex h-[13px] items-center pl-[2px]">
      <WindowsIcon />
      <div className="flex flex-1 pl-[1px]">
        {MENU.map(([label, w]) => (
          <span key={label} className={w}>{label}</span>
        ))}
      </div>
      <div className="flex gap-[2px] pr-px">
        <span className="flex h-[9px] w-[9px] items-end bg-white p-[2px]"><span className="h-px w-[4px] bg-[#555]" /></span>
        <span className="flex h-[9px] w-[9px] items-center justify-center bg-white">
          <svg width="7" height="7" viewBox="0 0 7 7" fill="none" stroke="#555"><path d="M2.500 2.500v-2h4v3h-2M.500 2.500h4v4h-4z" /></svg>
        </span>
        <span className="flex h-[9px] w-[9px] items-center justify-center bg-white">
          <svg width="6" height="6" viewBox="0 0 6 6"><path d="M1 1l4 4M5 1L1 5" stroke="#444" strokeWidth="1.100" /></svg>
        </span>
      </div>
    </div>
  );
}

export default function App() {
  return (
    <div className="flex h-[452px] w-[625px] flex-col overflow-hidden bg-white pt-[2px] font-['DejaVu_Sans_Condensed','DejaVu_Sans',sans-serif] text-[6.6px] leading-[9px] whitespace-nowrap text-[#1c1c1c]">
      <div className="mr-[2px] ml-[3px] flex h-[447px] flex-col bg-[#ece9d8]">
        <TitleBar />
        <MenuBar />
        <MainToolbar />
        <LineToolbar />
        <div className="flex h-[310px]">
          <div className="w-[118px] shrink-0 pt-[3px] pr-[2px] pl-px">
            <MarketWatch />
            <Navigator />
          </div>
          <div className="w-[502px]">
            <Chart />
            <ChartTabs />
          </div>
        </div>
        <Terminal />
        <StatusBar />
      </div>
      <div className="ml-[2px] flex h-[3px]">
        <div className="w-[58px] bg-[#3f9a3c]" />
        <div className="flex-1 bg-[#3a80e4]" />
        <div className="w-[48px] bg-[#18a4ee]" />
      </div>
    </div>
  );
}
